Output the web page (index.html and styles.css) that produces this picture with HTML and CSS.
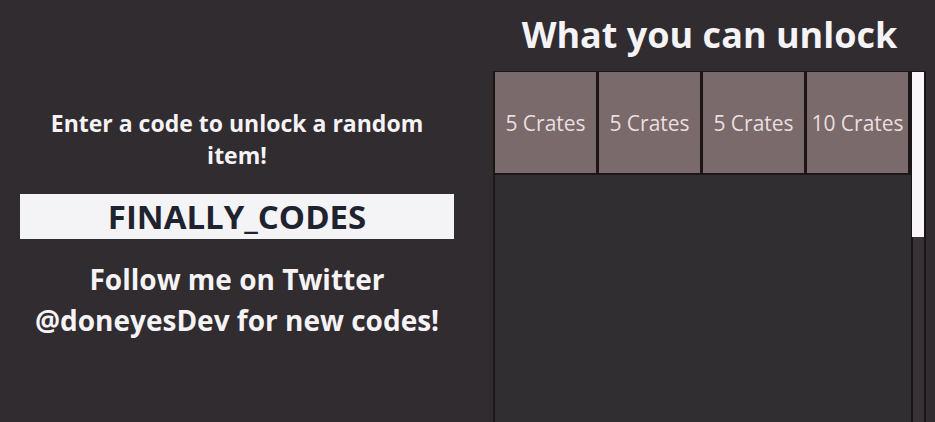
FILE: index.html
```html
<!DOCTYPE html>
<html lang="en">
<head>
    <meta charset="UTF-8">
    <meta name="viewport" content="width=device-width, initial-scale=1.0">
    <title>Codes</title>
    <link rel="stylesheet" href="styles.css">
</head>
<body>
    <div class="screen">
        <div class="redeem">
            <p class="prompt">Enter a code to unlock a random item!</p>
            <div class="code-box">FINALLY_CODES</div>
            <p class="follow">Follow me on Twitter<br>@doneyesDev for new codes!</p>
        </div>

        <div class="rewards">
            <h2 class="rewards-title">What you can unlock</h2>
            <div class="reward-frame">
                <div class="reward-list">
                    <div class="reward">5 Crates</div>
                    <div class="reward">5 Crates</div>
                    <div class="reward">5 Crates</div>
                    <div class="reward">10 Crates</div>
                </div>
                <div class="scrollbar">
                    <div class="scroll-thumb"></div>
                </div>
            </div>
        </div>
    </div>
</body>
</html>
```

FILE: styles.css
```css
body {
    margin: 0;
    background-color: #302c30;
    font-family: "Open Sans", Lato, sans-serif;
    color: #f5f3f5;
    overflow: hidden;
}
.screen {
    display: flex;
    height: 422px;
}
.redeem {
    width: 474px;
    display: flex;
    flex-direction: column;
    align-items: center;
    padding-top: 107px;
    box-sizing: border-box;
}
.prompt {
    margin: 0;
    width: 400px;
    font-size: 23px;
    font-weight: bold;
    line-height: 32px;
    text-align: center;
}
.code-box {
    margin-top: 23px;
    width: 434px;
    height: 45px;
    background-color: #f4f3f6;
    color: #1f2330;
    font-size: 33px;
    font-weight: bold;
    line-height: 45px;
    text-align: center;
}
.follow {
    margin: 20px 0 0;
    font-size: 28px;
    font-weight: bold;
    line-height: 41px;
    text-align: center;
}
.rewards {
    margin-left: 19px;
    width: 433px;
    display: flex;
    flex-direction: column;
}
.rewards-title {
    margin: 13px 0 14px;
    font-size: 36px;
    font-weight: bold;
    line-height: 44px;
    text-align: center;
}
.reward-frame {
    flex: 1;
    display: flex;
    border-top: 1px solid #1b1617;
    border-left: 2px solid #1b1617;
    background-color: #312e31;
}
.reward-list {
    display: flex;
    align-items: flex-start;
    width: 416px;
}
.reward {
    width: 104px;
    height: 103px;
    padding-top: 2px;
    box-sizing: border-box;
    border-right: 3px solid #1d1617;
    border-bottom: 2px solid #1d1617;
    background-color: #7a6a6b;
    color: #e9dfdf;
    font-size: 21px;
    line-height: 99px;
    text-align: center;
    white-space: nowrap;
}
.scrollbar {
    width: 15px;
    box-sizing: border-box;
    border-left: 2px solid #1a1517;
    border-right: 2px solid #1a1517;
    background-color: #383237;
}
.scroll-thumb {
    height: 165px;
    margin-left: -1px;
    background-color: #f8f6f9;
}
```
